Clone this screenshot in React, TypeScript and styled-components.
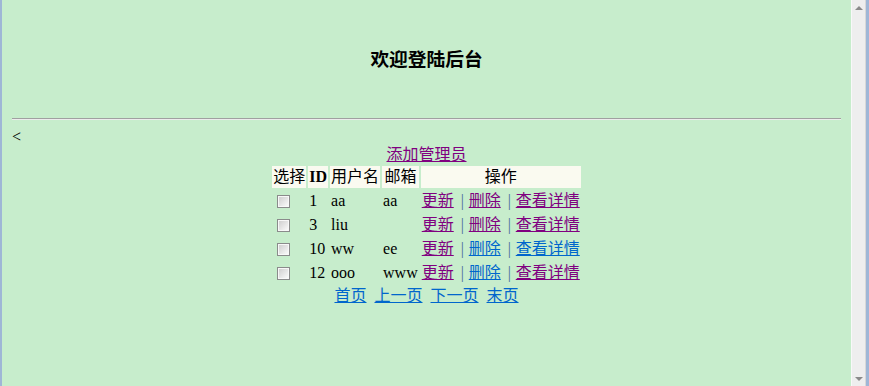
import React from "react";
import styled, { createGlobalStyle } from "styled-components";

const Global = createGlobalStyle`
  html, body { margin: 0; padding: 0; height: 100%; overflow: hidden; }
  body { font-family: "Liberation Serif", "Noto Sans CJK SC", serif; font-size: 16px; }
`;

const Frame = styled.div`
  display: flex;
  height: 386px;
  border-left: 2px solid #9fb6d6;
  border-right: 3px solid #9fb6d6;
  box-sizing: border-box;
`;

const Page = styled.div`
  flex: 1;
  background: #c7edcc;
  padding: 8px 8px 0;
  color: #000;
  min-width: 0;
`;

const ScrollBar = styled.div`
  width: 15px;
  background: #eeeeee;
  border-left: 1px solid #f8f8f8;
  border-right: 1px solid #d8d8d8;
  display: flex;
  flex-direction: column;
  justify-content: space-between;
  align-items: center;
  padding: 6px 0 5px;
  box-sizing: border-box;
`;

const Arrow = styled.div<{ $down?: boolean }>`
  width: 0;
  height: 0;
  border-left: 4px solid transparent;
  border-right: 4px solid transparent;
  ${(p) =>
    p.$down
      ? "border-top: 4px solid #8a8a8a;"
      : "border-bottom: 4px solid #8a8a8a;"}
`;

const Title = styled.h3`
  margin: 41px 0 0;
  font-size: 18.72px;
  line-height: 22px;
  font-weight: bold;
  text-align: center;
`;

const Rule = styled.hr`
  margin: 47px 2px 7px;
  height: 0;
  border: none;
  border-top: 1px solid #a0a0a0;
  border-bottom: 1px solid #ececec;
`;

const Back = styled.div`
  line-height: 19px;
  padding-left: 2px;
`;

const Center = styled.div`
  text-align: center;
  line-height: 18px;
`;

const Link = styled.a<{ $blue?: boolean }>`
  color: ${(p) => (p.$blue ? "#0066cc" : "#800080")};
  text-decoration: underline;
  cursor: pointer;
`;

const Table = styled.table`
  margin: 0 auto;
  border-collapse: separate;
  border-spacing: 2px;
`;

const HeadCell = styled.th<{ $bold?: boolean }>`
  background: #fafaf0;
  padding: 1px;
  height: 20px;
  line-height: 18px;
  font-weight: ${(p) => (p.$bold ? "bold" : "normal")};
  text-align: center;
  white-space: nowrap;
`;

const Cell = styled.td`
  padding: 1px;
  height: 20px;
  line-height: 18px;
  text-align: left;
  white-space: nowrap;
  vertical-align: middle;
`;

const Check = styled.input`
  appearance: none;
  -webkit-appearance: none;
  display: block;
  width: 13px;
  height: 13px;
  margin: 3px 3px 3px 4px;
  border: 1px solid #8a8b8b;
  box-sizing: border-box;
  background: linear-gradient(135deg, #cbcbcb 0%, #ececec 65%, #ffffff 100%);
  box-shadow: inset 0 0 0 1px #f8f8f8;
`;

const Sep = styled.span`
  display: inline-block;
  width: 15px;
  padding-left: 7px;
  box-sizing: border-box;
  color: #4a6a9a;
`;

const Pager = styled.div`
  text-align: center;
  line-height: 20px;
`;

const PageLink = styled(Link)`
  & + & {
    margin-left: 8px;
  }
`;

type Row = {
  id: number;
  name: string;
  email: string;
  del: boolean;
  view: boolean;
};

const rows: Row[] = [
  { id: 1, name: "aa", email: "aa", del: false, view: false },
  { id: 3, name: "liu", email: "", del: false, view: false },
  { id: 10, name: "ww", email: "ee", del: true, view: true },
  { id: 12, name: "ooo", email: "www", del: true, view: false },
];

export default function App() {
  return (
    <>
      <Global />
      <Frame>
        <Page>
          <Title>欢迎登陆后台</Title>
          <Rule />
          <Back>&lt;</Back>
          <Center>
            <Link>添加管理员</Link>
          </Center>
          <Table>
            <thead>
              <tr>
                <HeadCell>选择</HeadCell>
                <HeadCell $bold>ID</HeadCell>
                <HeadCell>用户名</HeadCell>
                <HeadCell>邮箱</HeadCell>
                <HeadCell>操作</HeadCell>
              </tr>
            </thead>
            <tbody>
              {rows.map((r) => (
                <tr key={r.id}>
                  <Cell>
                    <Check type="checkbox" />
                  </Cell>
                  <Cell>{r.id}</Cell>
                  <Cell>{r.name}</Cell>
                  <Cell>{r.email}</Cell>
                  <Cell>
                    <Link>更新</Link>
                    <Sep>|</Sep>
                    <Link $blue={r.del}>删除</Link>
                    <Sep>|</Sep>
                    <Link $blue={r.view}>查看详情</Link>
                  </Cell>
                </tr>
              ))}
            </tbody>
          </Table>
          <Pager>
            <PageLink $blue>首页</PageLink>
            <PageLink $blue>上一页</PageLink>
            <PageLink $blue>下一页</PageLink>
            <PageLink $blue>末页</PageLink>
          </Pager>
        </Page>
        <ScrollBar>
          <Arrow />
          <Arrow $down />
        </ScrollBar>
      </Frame>
    </>
  );
}
